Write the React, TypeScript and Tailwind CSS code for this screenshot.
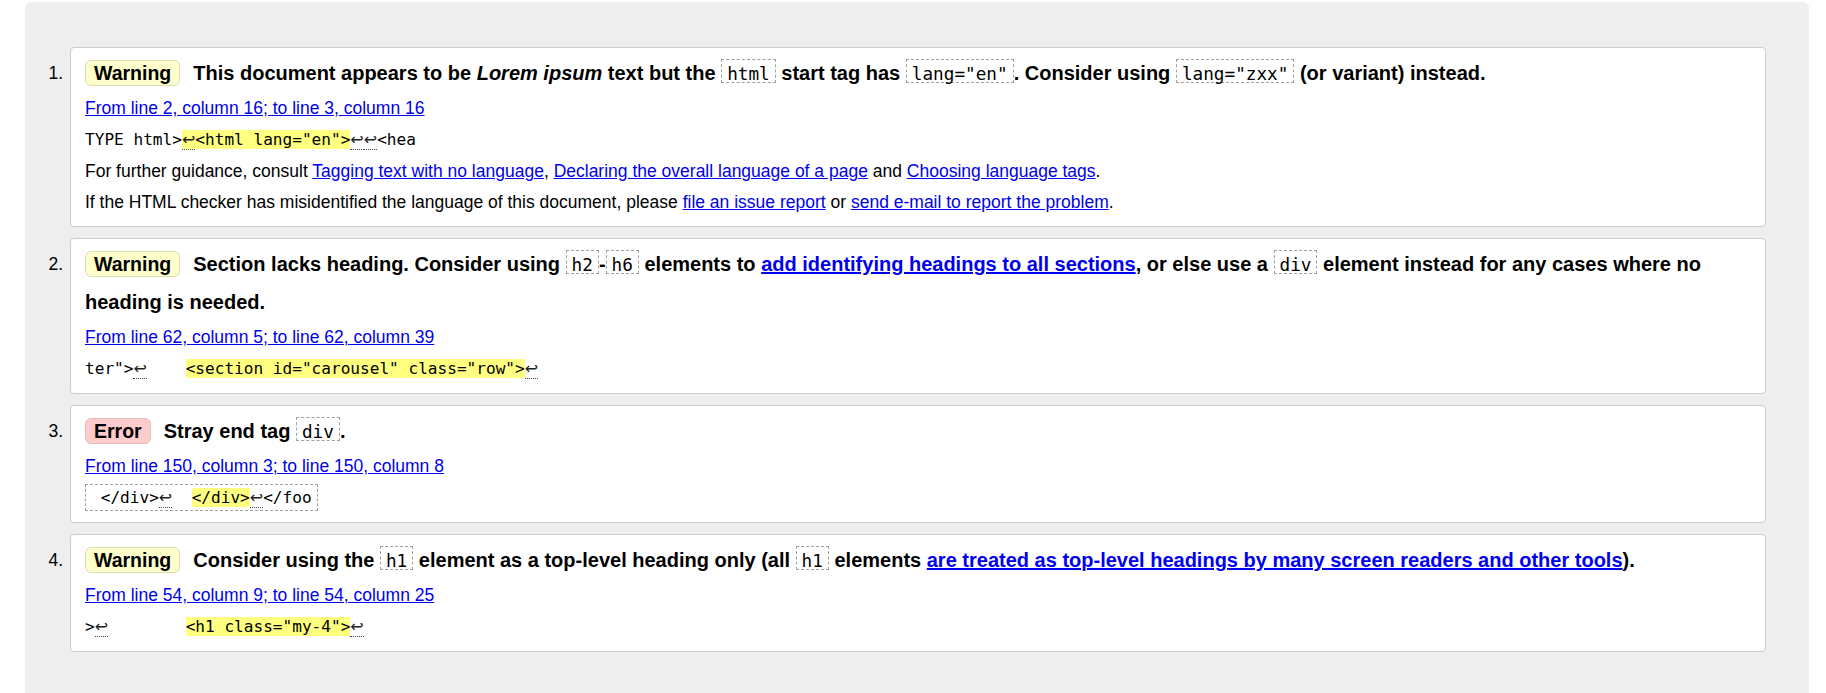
import type { ReactNode } from 'react';

const link = 'text-[#0000ee] underline';

function Badge({ kind }: { kind: 'warning' | 'error' }) {
  const isError = kind === 'error';
  return (
    <span
      className={
        'inline-block rounded-[6px] border px-[8px] text-[19.5px] leading-[24px] mr-[13px] ' +
        (isError ? 'bg-[#ffcccc] border-[#e6bcbc]' : 'bg-[#ffffcc] border-[#dcdcb4]')
      }
    >
      {isError ? 'Error' : 'Warning'}
    </span>
  );
}

// boxed element name inside a message title
function Tag({ children }: { children: ReactNode }) {
  return (
    <code className="inline-block border border-dashed border-[#a0a0a0] px-[5px] pt-[6px] leading-[16px] font-['DejaVu_Sans_Mono',monospace] text-[17.7px] font-normal">
      {children}
    </code>
  );
}

// line break marker in extracts
function Ret() {
  return (
    <span className="border-b border-dotted border-[#444] font-['DejaVu_Sans',sans-serif] text-[16px] text-[#222]">
      ↩
    </span>
  );
}

function Mark({ children }: { children: ReactNode }) {
  return <span className="bg-[#ffff80]">{children}</span>;
}

function Extract({ children, boxed }: { children: ReactNode; boxed?: boolean }) {
  return (
    <p className="mt-[10px] leading-[22px] whitespace-pre font-['DejaVu_Sans_Mono',monospace] text-[16.1px]">
      {boxed ? (
        <span className="border border-dashed border-[#a0a0a0] px-[5px] py-[3px]">{children}</span>
      ) : (
        children
      )}
    </p>
  );
}

function Message({
  n,
  kind,
  title,
  location,
  children,
}: {
  n: number;
  kind: 'warning' | 'error';
  title: ReactNode;
  location: string;
  children: ReactNode;
}) {
  return (
    <li className="flex">
      <div className="w-[45px] shrink-0 pr-[7px] pt-[7px] text-right leading-[38px] text-[17.5px]">{n}.</div>
      <div className="flex-1 rounded-[4px] border border-[#cccccc] bg-white pl-[14px] pr-[14px] pt-[6px] pb-[13px]">
        <p className="font-bold text-[20px] leading-[38px]">
          <Badge kind={kind} />
          {title}
        </p>
        <p className="mt-[5px] leading-[22px]">
          <a href="#" className={link}>
            {location}
          </a>
        </p>
        {children}
      </div>
    </li>
  );
}

export default function App() {
  return (
    <div className="h-screen overflow-hidden bg-white pt-[2px] pl-[25px] pr-[17px] font-['Liberation_Sans',Arial,sans-serif] text-[17.5px] text-black">
      <div className="h-full rounded-t-[6px] bg-[#eeeeee] pt-[45px] pr-[43px]">
        <ol className="flex flex-col gap-[11px]">
          <Message
            n={1}
            kind="warning"
            location="From line 2, column 16; to line 3, column 16"
            title={
              <>
                This document appears to be <i>Lorem ipsum</i> text but the <Tag>html</Tag> start tag has{' '}
                <Tag>lang="en"</Tag>. Consider using <Tag>lang="zxx"</Tag> (or variant) instead.
              </>
            }
          >
            <Extract>
              TYPE html&gt;
              <Mark>
                <Ret />
                &lt;html lang="en"&gt;
              </Mark>
              <Ret />
              <Ret />
              &lt;hea
            </Extract>
            <p className="mt-[9px] leading-[22px]">
              For further guidance, consult{' '}
              <a href="#" className={link}>
                Tagging text with no language
              </a>
              ,{' '}
              <a href="#" className={link}>
                Declaring the overall language of a page
              </a>{' '}
              and{' '}
              <a href="#" className={link}>
                Choosing language tags
              </a>
              .
            </p>
            <p className="mt-[9px] leading-[22px]">
              If the HTML checker has misidentified the language of this document, please{' '}
              <a href="#" className={link}>
                file an issue report
              </a>{' '}
              or{' '}
              <a href="#" className={link}>
                send e-mail to report the problem
              </a>
              .
            </p>
          </Message>

          <Message
            n={2}
            kind="warning"
            location="From line 62, column 5; to line 62, column 39"
            title={
              <>
                Section lacks heading. Consider using <Tag>h2</Tag>-<Tag>h6</Tag> elements to{' '}
                <a href="#" className={link}>
                  add identifying headings to all sections
                </a>
                , or else use a <Tag>div</Tag> element instead for any cases where no heading is needed.
              </>
            }
          >
            <Extract>
              ter"&gt;
              <Ret />
              {'    '}
              <Mark>&lt;section id="carousel" class="row"&gt;</Mark>
              <Ret />
            </Extract>
          </Message>

          <Message
            n={3}
            kind="error"
            location="From line 150, column 3; to line 150, column 8"
            title={
              <>
                Stray end tag <Tag>div</Tag>.
              </>
            }
          >
            <Extract boxed>
              {' </div>'}
              <Ret />
              {'  '}
              <Mark>&lt;/div&gt;</Mark>
              <Ret />
              &lt;/foo
            </Extract>
          </Message>

          <Message
            n={4}
            kind="warning"
            location="From line 54, column 9; to line 54, column 25"
            title={
              <>
                Consider using the <Tag>h1</Tag> element as a top-level heading only (all <Tag>h1</Tag> elements{' '}
                <a href="#" className={link}>
                  are treated as top-level headings by many screen readers and other tools
                </a>
                ).
              </>
            }
          >
            <Extract>
              &gt;
              <Ret />
              {'        '}
              <Mark>&lt;h1 class="my-4"&gt;</Mark>
              <Ret />
            </Extract>
          </Message>
        </ol>
      </div>
    </div>
  );
}
